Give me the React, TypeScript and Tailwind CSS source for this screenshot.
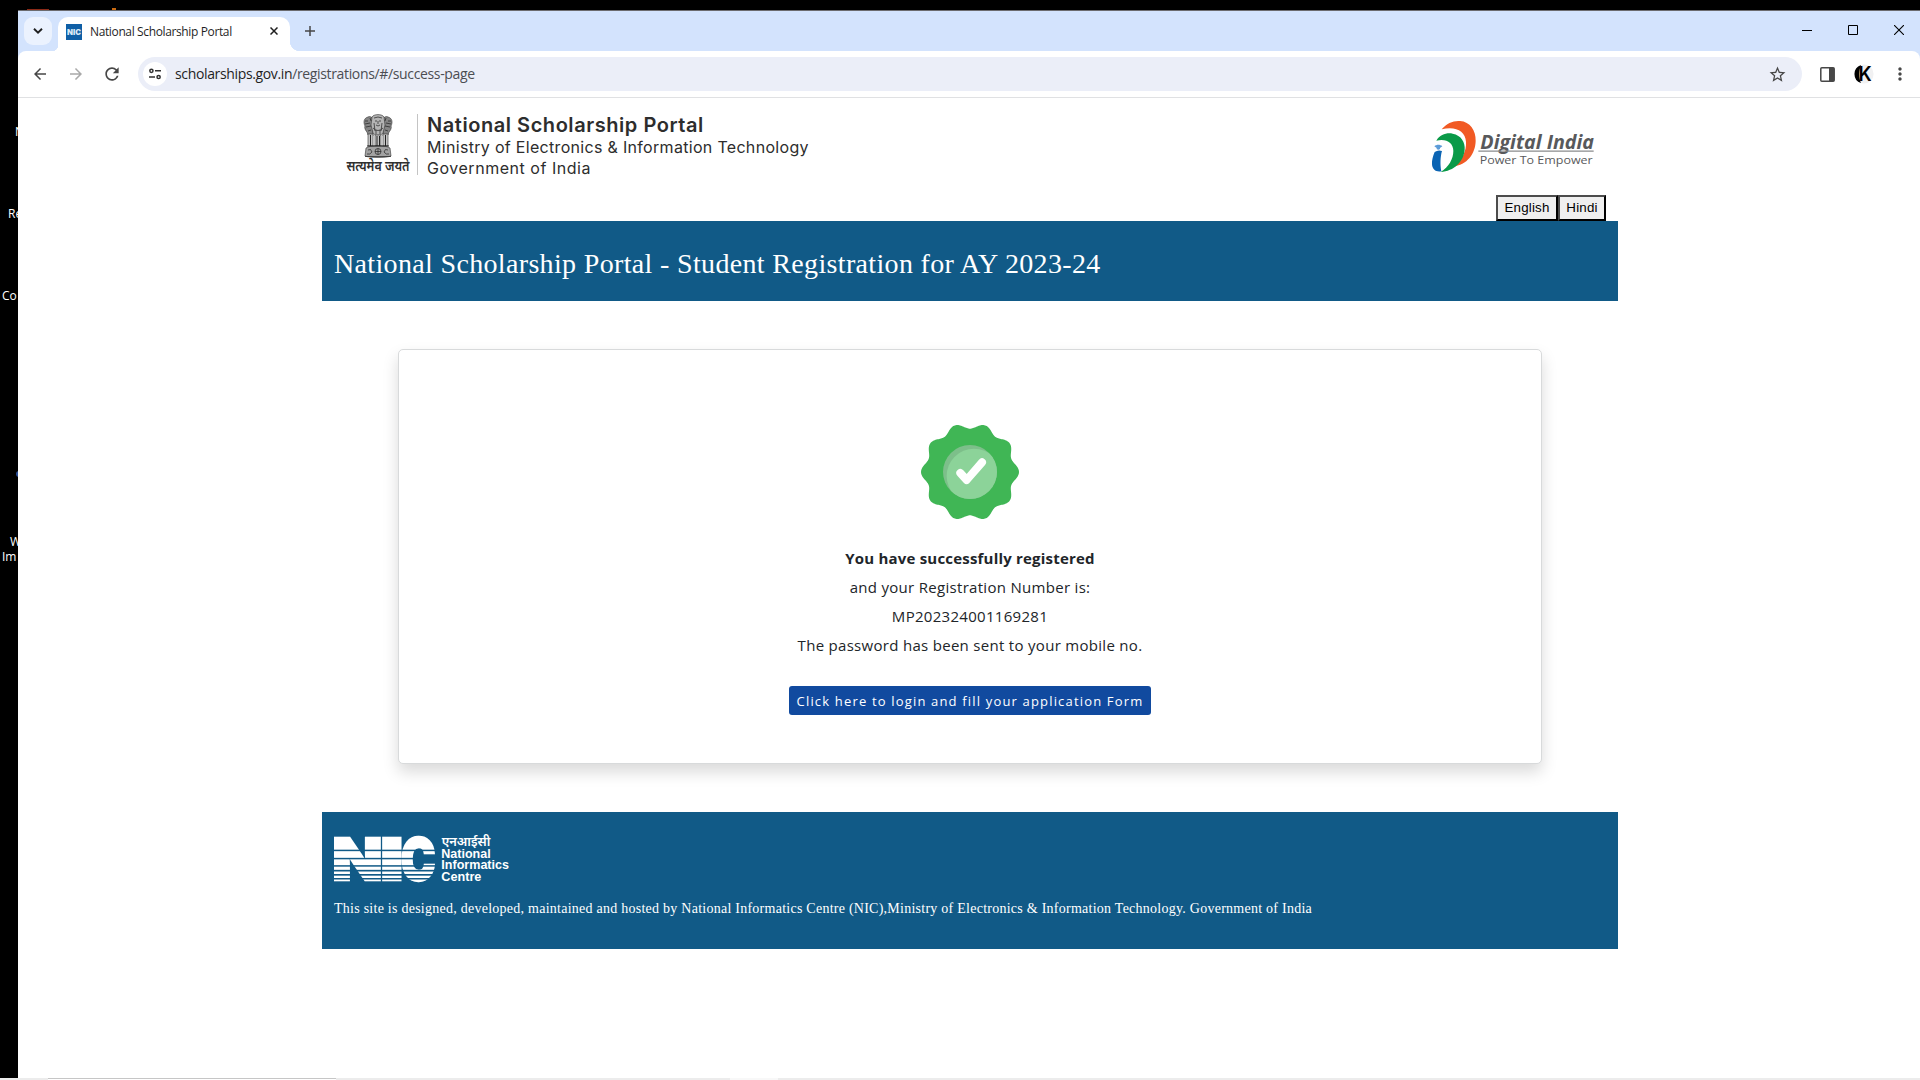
import React from 'react';
import { MdArrowBack, MdArrowForward, MdRefresh, MdStarOutline, MdMoreVert } from 'react-icons/md';

const SANS = "font-['Open_Sans','Noto_Sans',sans-serif]";

/* ---------- Browser chrome ---------- */

function TabStrip() {
  return (
    <div className="flex h-[41px] items-start justify-between border-t border-[#6b6b6f] bg-[#d3e3fd]">
      <div className="flex">
        <div className="mt-[6px] ml-[6px] flex size-[28px] items-center justify-center rounded-[9px] bg-[#ebf2fe]">
          <svg viewBox="0 0 10 6" className="h-[6px] w-[10px]" stroke="#1f1f1f" strokeWidth="1.9" fill="none">
            <path d="M1 0.8 5 4.6 9 0.8" />
          </svg>
        </div>
        <div className="flex items-end">
          <div className="size-[6px] bg-[radial-gradient(circle_at_0_0,#d3e3fd_6px,#ffffff_6.5px)]" />
          <div className="mt-[6px] flex h-[34px] w-[232px] items-center rounded-t-[10px] bg-white pb-[5px]">
            <svg viewBox="0 0 16 16" className="ml-[8px] size-[16px] shrink-0 overflow-visible">
              <rect width="16" height="16" fill="#0f5fa6" />
              <text x="1" y="10.6" textLength="14" lengthAdjust="spacingAndGlyphs" fill="#dbe9f6" fontFamily="Inter, sans-serif" fontWeight="900" fontSize="7.6">
                NIC
              </text>
            </svg>
            <span className={`ml-[8px] w-[180px] text-[12px] leading-[16px] tracking-[-0.37px] whitespace-nowrap text-[#1f1f1f] ${SANS}`}>
              National Scholarship Portal
            </span>
            <svg viewBox="0 0 8 8" className="mb-px size-[8px] shrink-0" stroke="#1f1f1f" strokeWidth="1.5">
              <path d="M0.5 0.5 7.5 7.5M7.5 0.5 0.5 7.5" />
            </svg>
          </div>
          <div className="size-[10px] bg-[radial-gradient(circle_at_100%_0,#d3e3fd_10px,#ffffff_10.5px)]" />
        </div>
        <svg viewBox="0 0 10 10" className="mt-[15px] ml-[5px] size-[10px]" stroke="#474747" strokeWidth="1.5">
          <path d="M5 0V10M0 5H10" />
        </svg>
      </div>
      <div className="mt-[14px] mr-[16px] flex gap-[36px]">
        <svg viewBox="0 0 10 10" className="size-[10px]" stroke="#000">
          <path d="M0 5.5H10" />
        </svg>
        <svg viewBox="0 0 10 10" className="size-[10px]" stroke="#000" fill="none">
          <path d="M0.5 0.5H9.5V9.5H0.5Z" />
        </svg>
        <svg viewBox="0 0 10 10" className="size-[10px]" stroke="#000" strokeWidth="1.1">
          <path d="M0 0 10 10M10 0 0 10" />
        </svg>
      </div>
    </div>
  );
}

function Toolbar() {
  return (
    <div className="bg-[#d3e3fd]">
      <div className="flex h-[47px] items-center rounded-t-[8px] border-b border-[#e0e1e3] bg-white text-[#474747]">
        <MdArrowBack className="ml-[13px] size-[18px]" />
        <MdArrowForward className="ml-[18px] size-[18px] text-[#a9a9a9]" />
        <MdRefresh className="ml-[17px] size-[20px]" />
        <div className="ml-[16px] flex h-[34px] w-[1664px] items-center rounded-full bg-[#ebeef8]">
          <div className="ml-[5px] flex size-[24px] items-center justify-center rounded-full bg-white">
            <svg viewBox="0 0 12 12" className="size-[12px]" stroke="#303030" strokeWidth="1.5" fill="none">
              <circle cx="2.4" cy="2.8" r="1.6" />
              <path d="M6 2.8H12M0 9H6" />
              <circle cx="9.6" cy="9" r="1.6" />
            </svg>
          </div>
          <span className={`ml-[8px] flex-1 text-[14px] leading-[20px] tracking-[-0.354px] whitespace-nowrap text-[#4b4d52] ${SANS}`}>
            <span className="text-[#1f1f1f]">scholarships.gov.in</span>/registrations/#/success-page
          </span>
          <MdStarOutline className="mr-[15px] size-[19px]" />
        </div>
        <svg viewBox="0 0 15 15" className="ml-[18px] size-[15px]">
          <rect x="0.8" y="0.8" width="13.4" height="13.4" rx="1" fill="none" stroke="#474747" strokeWidth="1.5" />
          <path d="M9 1H14V14H9Z" fill="#474747" />
        </svg>
        <svg viewBox="0 0 20 20" className="ml-[19px] size-[20px] overflow-visible">
          <circle cx="10" cy="10" r="9.6" fill="#f1f1f2" />
          <path d="M7 0.9A9.6 9.6 0 0 0 7 19.1C4.8 14 4.8 6 7 0.9Z" fill="#000" />
          <text x="4.4" y="17" textLength="13.2" lengthAdjust="spacingAndGlyphs" fontFamily="Inter, sans-serif" fontWeight="600" fontSize="20" fill="#000">
            K
          </text>
        </svg>
        <MdMoreVert className="ml-[16px] size-[20px]" />
      </div>
    </div>
  );
}

/* ---------- Logos ---------- */

function Emblem() {
  return (
    <svg viewBox="0 0 64 62" className="h-[62px] w-[64px] overflow-visible">
      <g stroke="#333" strokeWidth="0.6" fill="#8d8d8d">
        <path d="M22 3C18 4 17 8 19 12C18 14 20 17 21 18L22 21 27 22V5C26 3 24 2 22 3Z" fill="#858585" />
        <path d="M42 3C46 4 47 8 45 12C46 14 44 17 43 18L42 21 37 22V5C38 3 40 2 42 3Z" fill="#858585" />
        <path d="M26 3C28 -0.2 36 -0.2 38 3L39 11 37 19C35 22 29 22 27 19L25 11Z" fill="#b4b4b4" />
        <path d="M22 20H27V32H22ZM29 21H35V32H29ZM37 20H42V32H37Z" fill="#c4c4c4" />
        <path d="M20 34C24 31 40 31 44 34L45 42C40 44 24 44 19 42Z" fill="#a2a2a2" />
      </g>
      <g stroke="#222" strokeWidth="0.7" fill="none">
        <path d="M28 4Q32 2 36 4M29 7H31M33 7H35M30 11Q32 13 34 11M27 14Q32 19 37 14M32 7V10M28 9 29 17M36 9 35 17M30 16V20M34 16V20" />
        <path d="M19 7H22M19 10 24 9M20 13 25 12M22 17 25 16M45 7H42M45 10 40 9M44 13 39 12M42 17 39 16M24 4 25 7M40 4 39 7" />
        <path d="M24.5 21V32M31 22V32M33.5 22V32M39.5 21V32M21 32H43" strokeWidth="1" />
        <circle cx="32" cy="37.5" r="3" />
        <path d="M32 34.5V40.5M29 37.5H35M22 36Q25 34 26 38Q24 41 21 40M42 36Q39 34 38 38Q40 41 43 40M19 42.5H45" />
      </g>
      <text x="0.5" y="57" textLength="63" lengthAdjust="spacingAndGlyphs" fontFamily="'Noto Sans', sans-serif" fontWeight="600" fontSize="13.5" fill="#2f2f2f">
        सत्यमेव जयते
      </text>
    </svg>
  );
}

function DigitalIndiaLogo() {
  return (
    <svg viewBox="150 69 498 168" className="h-[56px] w-[166px] overflow-visible">
      <path d="M185 103C200 84 222 76 240 78C270 80 288 106 287 138C286 176 262 210 218 215C246 196 260 168 258 140C256 108 226 92 185 103Z" fill="#f15a24" />
      <path d="M169 137C180 118 202 112 218 116C244 121 256 142 254 164C251 200 222 228 182 231C206 216 220 192 220 168C220 144 200 130 169 137Z" fill="#0a9a48" />
      <path d="M164 171C171 166 178 165 186 168C181 184 180 208 184 229C168 232 157 224 156 208C155 196 159 183 164 171Z" fill="#0b64b3" />
      <path d="M163 154C170 148 180 148 187 154L180 159C181 162 178 164 175 164C172 164 169 162 170 159Z" fill="#5b9bd8" />
      <text x="301" y="163" textLength="341" lengthAdjust="spacingAndGlyphs" fontFamily="'Open Sans', sans-serif" fontWeight="700" fontStyle="italic" fontSize="60" fill="#58595b">
        Digital India
      </text>
      <path d="M295 168.5H641" stroke="#8a8b8d" strokeWidth="4" />
      <text x="299" y="206" textLength="339" lengthAdjust="spacingAndGlyphs" fontFamily="'Open Sans', sans-serif" fontSize="34" fill="#58595b">
        Power To Empower
      </text>
    </svg>
  );
}

const STRIPES: [number, number][] = [
  [149, 4.5],
  [173.5, 4.5],
  [195.5, 4.5],
  [209.5, 5],
  [222, 5],
  [234, 4.5],
];

function NicLogo() {
  return (
    <svg viewBox="72 93 531 153" className="h-[51px] w-[177px] overflow-visible" fill="#fff">
      <g fontFamily="Inter, sans-serif" fontWeight="900" fontSize="174" stroke="#fff" strokeWidth="7">
        <text x="67" y="239.5" textLength="151" lengthAdjust="spacingAndGlyphs">N</text>
        <text x="210" y="239.5" textLength="71" lengthAdjust="spacingAndGlyphs">I</text>
        <text x="272" y="239.5" textLength="104" lengthAdjust="spacingAndGlyphs">C</text>
      </g>
      {STRIPES.map(([y, h]) => (
        <rect key={y} x="66" y={y} width="312" height={h} fill="#115a87" />
      ))}
      <text x="395" y="137" textLength="146" lengthAdjust="spacingAndGlyphs" fontFamily="'Noto Sans', sans-serif" fontWeight="600" fontSize="39">
        एनआईसी
      </text>
      <g fontFamily="'Liberation Sans', sans-serif" fontWeight="700" fontSize="37">
        <text x="394" y="175" textLength="148" lengthAdjust="spacingAndGlyphs">National</text>
        <text x="394" y="208" textLength="203" lengthAdjust="spacingAndGlyphs">Informatics</text>
        <text x="394" y="242" textLength="120" lengthAdjust="spacingAndGlyphs">Centre</text>
      </g>
    </svg>
  );
}

const BADGE_POINTS = Array.from({ length: 360 }, (_, deg) => {
  const a = (deg * Math.PI) / 180;
  const r = 138.5 + 8.5 * Math.cos(10 * a);
  return `${(270 + r * Math.cos(a)).toFixed(2)},${(216 + r * Math.sin(a)).toFixed(2)}`;
}).join(' ');

function SuccessBadge() {
  return (
    <svg viewBox="120 72 300 288" className="h-[96px] w-[100px]">
      <defs>
        <clipPath id="disc">
          <circle cx="270" cy="216" r="81" />
        </clipPath>
      </defs>
      <polygon points={BADGE_POINTS} fill="#40b655" />
      <circle cx="270" cy="216" r="81" fill="#7dbf8a" />
      <circle cx="282" cy="228" r="82" fill="#8cd399" clipPath="url(#disc)" />
      <path d="M241 219 260 240 306 187" fill="none" stroke="#fff" strokeWidth="24" strokeLinecap="round" strokeLinejoin="round" />
    </svg>
  );
}

/* ---------- Page ---------- */

function PortalHeader() {
  return (
    <header className="flex h-[123px] justify-between">
      <div className="flex pt-[16px] pl-[24px]">
        <Emblem />
        <div className="ml-[7px] h-[61px] w-px bg-[#c4c4c4]" />
        <div className="ml-[9px] font-['Inter',sans-serif] whitespace-nowrap text-[#2d2d2d]">
          <div className="pt-px text-[20px] leading-[21px] font-semibold tracking-[0.55px]">National Scholarship Portal</div>
          <div className="-mt-px text-[16px] leading-[24px] tracking-[0.31px]">Ministry of Electronics &amp; Information Technology</div>
          <div className="pt-px text-[16px] leading-[17px] tracking-[0.53px]">Government of India</div>
        </div>
      </div>
      <div className="flex flex-col items-end justify-between pt-[20px] pr-[12px]">
        <div className="pr-[10px]">
          <DigitalIndiaLogo />
        </div>
        <div className="flex font-['Liberation_Sans',sans-serif] text-[13.333px] leading-[15px] text-black">
          <button className="h-[26px] w-[62px] border-2 border-t-[#4c4c4c] border-r-black border-b-black border-l-[#4c4c4c] bg-[#efefef] pb-px tracking-[0.2px]">
            English
          </button>
          <button className="h-[26px] w-[48px] border-2 border-t-[#4c4c4c] border-r-black border-b-black border-l-[#4c4c4c] bg-[#efefef] pb-px tracking-[0.2px]">
            Hindi
          </button>
        </div>
      </div>
    </header>
  );
}

function SuccessCard() {
  return (
    <section className={`mx-[76px] mt-[48px] flex h-[415px] flex-col items-center rounded-[5px] border border-[#d8dadb] bg-white pt-[74px] text-[15px] leading-[29px] text-[#212529] shadow-[0_8px_16px_rgba(0,0,0,0.15)] ${SANS}`}>
      <SuccessBadge />
      <div className="mt-[24px] font-bold tracking-[0.2px]">You have successfully registered</div>
      <div className="tracking-[0.3px]">and your Registration Number is:</div>
      <div className="tracking-[0.3px]">MP202324001169281</div>
      <div className="tracking-[0.3px]">The password has been sent to your mobile no.</div>
      <button className="mt-[26px] h-[29px] w-[362px] rounded-[3px] bg-[#114a9f] text-[13px] leading-[30px] tracking-[1.17px] whitespace-nowrap text-white">
        Click here to login and fill your application Form
      </button>
    </section>
  );
}

function Page() {
  return (
    <main className="flex flex-1 flex-col bg-white pl-[304px]">
      <div className="w-[1296px]">
        <PortalHeader />
        <div className="flex h-[80px] items-center bg-[#115a87] pt-[6px] pl-[12px] font-['Liberation_Serif',serif] text-[28px] tracking-[0.34px] whitespace-nowrap text-white">
          National Scholarship Portal - Student Registration for AY 2023-24
        </div>
        <SuccessCard />
        <footer className="mt-[48px] h-[137px] bg-[#115a87] pt-[19px] pl-[12px] text-white">
          <NicLogo />
          <p className="mt-[16px] font-['Liberation_Serif',serif] text-[14px] leading-[21px] tracking-[0.252px] whitespace-nowrap">
            This site is designed, developed, maintained and hosted by National Informatics Centre (NIC),Ministry of Electronics &amp; Information Technology. Government of India
          </p>
        </footer>
      </div>
    </main>
  );
}

/* ---------- Desktop behind the window ---------- */

const LABELS = [
  { text: 'N', at: 'left-[15px] top-[124px]' },
  { text: 'Re', at: 'left-[8px] top-[206px]' },
  { text: 'Co', at: 'left-[2px] top-[288px]' },
  { text: 'W', at: 'left-[10px] top-[534px]' },
  { text: 'Im', at: 'left-[2px] top-[549px]' },
];

export default function App() {
  return (
    <div className="flex h-[1080px] w-[1920px] flex-col overflow-hidden bg-black">
      <div className="relative flex h-[1078px] pt-[10px]">
        <div className="absolute top-[9px] left-[27px] h-px w-[22px] bg-[#8c2a17]" />
        <div className="absolute top-[8px] left-[112px] h-[2px] w-[4px] bg-[#c8690f]" />
        <div className={`w-[18px] shrink-0 text-[12px] leading-[16px] text-white ${SANS}`}>
          {LABELS.map((l) => (
            <span key={l.text} className={`absolute ${l.at}`}>
              {l.text}
            </span>
          ))}
          <span className="absolute top-[471px] left-[16px] h-[6px] w-[6px] rounded-full bg-[#2c4f96]" />
        </div>
        <div className="relative flex flex-1 flex-col bg-white">
          <TabStrip />
          <Toolbar />
          <Page />
        </div>
      </div>
      <div className="flex h-[2px] bg-[#ececec] pl-[48px]">
        <div className="h-[2px] w-[288px] border-t border-[#c6c6c6] bg-white" />
        <div className="ml-[394px] h-[2px] w-[48px] bg-[#f8f8f8]" />
      </div>
    </div>
  );
}
